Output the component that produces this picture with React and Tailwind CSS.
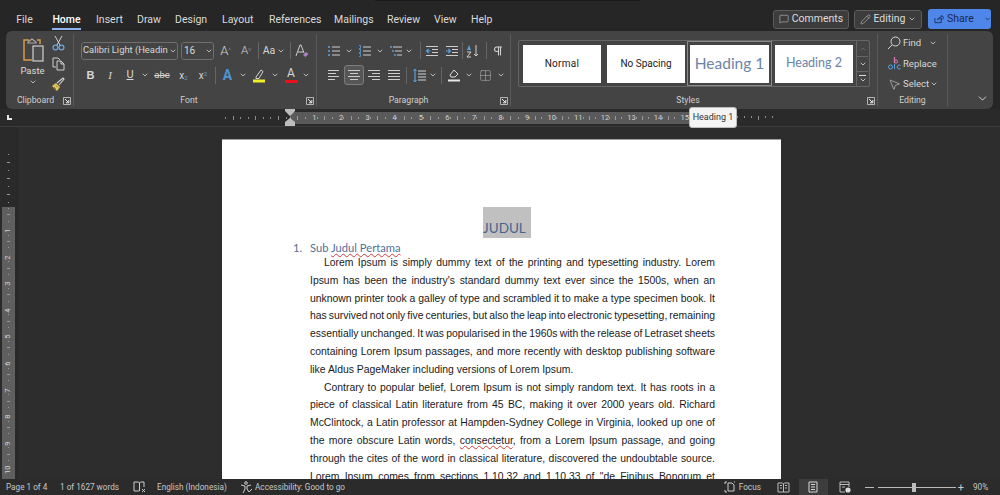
import React from "react";
import { ChevronDown, ChevronUp, MessageSquare, Pencil, MousePointer2, Pilcrow, Grid2x2 } from "lucide-react";

const G = "#cdcdcd";
const B = "#5aa0dc";

const Chev = ({ w = "w-[12px]" }) => (
  <span className={`${w} flex justify-center shrink-0`}>
    <ChevronDown size={8} strokeWidth={2.4} color="#d6d6d6" />
  </span>
);

const Ic = ({ children, w = 14, h = 14, vb = "0 0 14 14" }) => (
  <svg width={w} height={h} viewBox={vb} fill="none" className="shrink-0">{children}</svg>
);

const Lines = ({ kind }) => {
  const rows = {
    left: [[1, 12], [1, 9], [1, 12], [1, 8]],
    center: [[1, 13], [3, 11], [1, 13], [3, 11]],
    right: [[1, 13], [5, 13], [1, 13], [5, 13]],
    just: [[1, 13], [1, 13], [1, 13], [1, 13]],
  }[kind];
  return (
    <Ic>
      {rows.map((r, i) => (
        <path key={i} d={`M${r[0]} ${2.5 + i * 3}H${r[1]}`} stroke={G} strokeWidth="1" />
      ))}
    </Ic>
  );
};

const ListIc = ({ kind }) => (
  <Ic>
    {[3, 7, 11].map((y, i) => (
      <g key={y}>
        {kind === "bul" && <circle cx="2" cy={y} r="1.1" fill={B} />}
        {kind === "num" && <path d={`M1 ${y - 1.5}h1.5v3H1`} stroke={B} strokeWidth=".8" />}
        {kind === "multi" && <path d={`M${1 + i * 2} ${y}h2`} stroke={B} strokeWidth="1.4" />}
        <path d={`M${kind === "multi" ? 4 + i * 2 : 5} ${y}H13`} stroke={G} strokeWidth="1" />
      </g>
    ))}
  </Ic>
);

const Indent = ({ flip }) => (
  <Ic>
    <path d="M1 2.5h12M7 5.5h6M7 8.5h6M1 11.5h12" stroke={G} strokeWidth="1" />
    <path d={flip ? "M1 7h4M3.4 5l2 2-2 2" : "M5.5 7h-4M3.6 5l-2 2 2 2"} stroke={B} strokeWidth="1.2" />
  </Ic>
);

const Launcher = () => (
  <svg width="8" height="8" viewBox="0 0 8 8" fill="none" className="shrink-0">
    <path d="M.5 .5h7v7h-7z" stroke="#cfcfcf" strokeWidth=".8" />
    <path d="M2 2l3.6 3.6M3 5.8h2.8V3" stroke="#ececec" strokeWidth="1" />
  </svg>
);

const Vsep = () => <span className="block w-px h-[17px] bg-[#666666] shrink-0" />;

const Group = ({ w, label, launcher, children, labelPad = "pr-[12px]" }) => (
  <div className={`${w} shrink-0 h-full flex flex-col border-r border-[#5a5a5a]`}>
    <div className="flex-1 min-h-0">{children}</div>
    <div className={`h-[12px] relative flex items-center justify-center pt-[2px] text-[8.7px] text-[#cfcfcf] ${labelPad}`}>
      <span>{label}</span>
      {launcher && (
        <span className="absolute right-[2px] top-[3px]">
          <Launcher />
        </span>
      )}
    </div>
  </div>
);

const Btn = ({ w, children, cls = "" }) => (
  <span className={`${w} h-[20px] flex items-center justify-center shrink-0 ${cls}`}>{children}</span>
);

const Clipboard = () => (
  <div className="flex pl-[14px] pt-[3px]">
    <div className="w-[25px] flex flex-col items-center">
      <svg width="24" height="25" viewBox="0 0 24 25" fill="none">
        <path d="M8 3H3v20h8" stroke="#d99a45" strokeWidth="1.5" />
        <path d="M16 3h3v4" stroke="#d99a45" strokeWidth="1.5" />
        <path d="M7 5l4-3 4 3v1H7z" stroke="#a8a8a8" strokeWidth="1.2" />
        <rect x="12" y="9" width="10" height="15" fill="#4c4c4c" stroke="#dcdcdc" strokeWidth="1.1" />
      </svg>
      <span className="text-[9.5px] text-[#dcdcdc] mt-[3px] leading-[11px]">Paste</span>
      <ChevronDown size={8} strokeWidth={2.4} color="#d6d6d6" className="mt-[2px]" />
    </div>
    <div className="flex flex-col items-center ml-[6px] -mt-[1px] gap-[6px]">
      <svg width="13" height="15" viewBox="0 0 13 15" fill="none">
        <path d="M3 0l5 9M10 0L5 9" stroke="#cfcfcf" strokeWidth="1" />
        <circle cx="3.5" cy="11.5" r="2.4" stroke="#6aa5db" strokeWidth="1.3" />
        <circle cx="9.5" cy="11.5" r="2.4" stroke="#6aa5db" strokeWidth="1.3" />
      </svg>
      <svg width="13" height="14" viewBox="0 0 13 14" fill="none">
        <path d="M4 10H1V1h5l2 2" stroke="#cfcfcf" />
        <path d="M5 4h4l3 3v6H5zM9 4v3h3" stroke="#cfcfcf" />
      </svg>
      <svg width="14" height="14" viewBox="0 0 14 14" fill="none">
        <path d="M1 9l4-3 4 4-3 4z" fill="#e5c95a" />
        <path d="M3 10l2 2M5 8.5l2 2" stroke="#6b5a20" strokeWidth=".8" />
        <path d="M6 6l6-5 1 1-5 6" stroke="#d2d2d2" strokeWidth="1.1" />
      </svg>
    </div>
  </div>
);

const FontGroup = () => (
  <div className="flex flex-col pl-[7px] pt-[7px]">
    <div className="flex items-center h-[19px]">
      <div className="w-[97px] h-[18px] border border-[#6e6e6e] rounded-[3px] flex items-center justify-between pl-[1px] text-[9.4px] text-[#d8d8d8]">
        <span className="w-[85px] overflow-hidden whitespace-nowrap">Calibri Light (Heading</span>
        <Chev w="w-[9px]" />
      </div>
      <div className="ml-[3px] w-[33px] h-[18px] border border-[#6e6e6e] rounded-[3px] flex items-center justify-between pl-[2px] text-[10px] text-[#d8d8d8]">
        <span>16</span>
        <Chev w="w-[9px]" />
      </div>
      <Btn w="w-[21px] ml-[1px]"><span className="text-[13px] text-[#d4d4d4] font-light">A<sup className="text-[6px] text-[#8fb4d8]">^</sup></span></Btn>
      <Btn w="w-[20px]"><span className="text-[11.5px] text-[#d4d4d4] font-light">A<sup className="text-[6px] text-[#8fb4d8]">v</sup></span></Btn>
      <span className="ml-[2px]"><Vsep /></span>
      <Btn w="w-[26px] ml-[2px]"><span className="text-[10.5px] text-[#d4d4d4]">Aa</span><ChevronDown size={8} strokeWidth={2.4} color="#d6d6d6" className="ml-[2px]" /></Btn>
      <span className="ml-[3px]"><Vsep /></span>
      <Btn w="w-[20px] ml-[1px]">
        <svg width="14" height="14" viewBox="0 0 14 14" fill="none">
          <path d="M1 12L5 1h1l3 8M3 8h5" stroke="#cfcfcf" strokeWidth="1" />
          <path d="M8 11l3-3 2.5 2-3 3z" fill="#b07fc7" />
        </svg>
      </Btn>
    </div>
    <div className="flex items-center h-[20px] mt-[5px] text-[#d8d8d8]">
      <Btn w="w-[19px]"><span className="text-[11px] font-bold" style={{ fontFamily: "Liberation Sans" }}>B</span></Btn>
      <Btn w="w-[20px]"><span className="text-[11px] italic" style={{ fontFamily: "Liberation Serif" }}>I</span></Btn>
      <Btn w="w-[20px]"><span className="text-[11px] underline">U</span></Btn>
      <Chev w="w-[10px]" />
      <Btn w="w-[24px]"><span className="text-[9.5px] line-through">abc</span></Btn>
      <Btn w="w-[19px]"><span className="text-[10px]">x<sub className="text-[6px] text-[#6f9fc9]">2</sub></span></Btn>
      <Btn w="w-[20px]"><span className="text-[10px]">x<sup className="text-[6px] text-[#6f9fc9]">2</sup></span></Btn>
      <span className="ml-[2px]"><Vsep /></span>
      <Btn w="w-[21px] ml-[1px]"><span className="text-[14px] font-bold text-[#4f94d4]">A</span></Btn>
      <Chev w="w-[9px]" />
      <Btn w="w-[22px] ml-[1px]">
        <svg width="14" height="15" viewBox="0 0 14 15" fill="none">
          <path d="M4 9l5-7 2 1.5-4 7H4z" stroke="#d2d2d2" />
          <rect x="1" y="11.5" width="12" height="3" fill="#f2ee2a" />
        </svg>
      </Btn>
      <Chev w="w-[9px]" />
      <Btn w="w-[20px] ml-[2px]">
        <span className="flex flex-col items-center">
          <span className="text-[12px] leading-[11px]">A</span>
          <span className="w-[13px] h-[3px] bg-[#e8101a] mt-[1px]" />
        </span>
      </Btn>
      <Chev w="w-[9px]" />
    </div>
  </div>
);

const ParagraphGroup = () => (
  <div className="flex flex-col pl-[9px] pt-[7px]">
    <div className="flex items-center h-[19px]">
      <Btn w="w-[16px]"><ListIc kind="bul" /></Btn>
      <Chev w="w-[14px]" />
      <Btn w="w-[17px]"><ListIc kind="num" /></Btn>
      <Chev w="w-[14px]" />
      <Btn w="w-[17px]"><ListIc kind="multi" /></Btn>
      <Chev w="w-[10px]" />
      <span className="ml-[6px]"><Vsep /></span>
      <Btn w="w-[20px] ml-[1px]"><Indent /></Btn>
      <Btn w="w-[20px]"><Indent flip /></Btn>
      <Vsep />
      <Btn w="w-[18px]">
        <svg width="14" height="16" viewBox="0 0 14 16" fill="none">
          <path d="M2 7l2-5 2 5z" fill={B} />
          <path d="M2 9h4l-4 5h4" stroke="#d2d2d2" />
          <path d="M11 2v11M9 11l2 2 2-2" stroke="#d2d2d2" />
        </svg>
      </Btn>
      <span className="ml-[5px]"><Vsep /></span>
      <Btn w="w-[21px]"><Pilcrow size={12} strokeWidth={2.2} color="#cfcfcf" /></Btn>
    </div>
    <div className="flex items-center h-[20px] mt-[5px]">
      <Btn w="w-[16px]"><Lines kind="left" /></Btn>
      <Btn w="w-[20px] ml-[2px] border border-[#7c7c7c] rounded-[3px] bg-[#565656]"><Lines kind="center" /></Btn>
      <Btn w="w-[20px]"><Lines kind="right" /></Btn>
      <Btn w="w-[20px]"><Lines kind="just" /></Btn>
      <span className="ml-[2px]"><Vsep /></span>
      <Btn w="w-[21px] ml-[1px]">
        <svg width="14" height="15" viewBox="0 0 14 15" fill="none">
          <path d="M3 1v13" stroke={B} strokeWidth="1.2" />
          <path d="M1.5 3L3 1l1.5 2M1.5 12L3 14l1.5-2" stroke={B} />
          <path d="M6 3h8M6 6h8M6 9h8M6 12h8" stroke="#d2d2d2" />
        </svg>
      </Btn>
      <Chev w="w-[8px]" />
      <span className="ml-[4px]"><Vsep /></span>
      <Btn w="w-[21px] ml-[1px]">
        <svg width="14" height="15" viewBox="0 0 14 15" fill="none">
          <path d="M3 7l4-5 4 4-3 3H4z" stroke="#dcdcdc" />
          <rect x="1" y="11.5" width="12" height="2" fill="#e8e8e8" />
        </svg>
      </Btn>
      <Chev w="w-[9px]" />
      <Btn w="w-[20px] ml-[2px]"><Grid2x2 size={13} strokeWidth={1} color="#b9b9b9" /></Btn>
      <Chev w="w-[12px]" />
    </div>
  </div>
);

const StyleCard = ({ children, w = "w-[78px]", cls = "" }) => (
  <div className={`${w} h-[38px] shrink-0 bg-white flex items-center justify-center whitespace-nowrap ${cls}`}>{children}</div>
);

const StylesGroup = () => (
  <div className="pl-[7px] pt-[6px]">
    <div className="w-[352px] h-[47px] border border-[#666666] rounded-[2px] flex items-center pl-[4px]">
      <div className="flex items-center">
        <StyleCard cls="text-[10px] text-[#222222] tracking-[0.3px]">Normal</StyleCard>
        <StyleCard cls="ml-[6px] text-[10px] text-[#222222]">No Spacing</StyleCard>
        <div className="ml-[2px] w-[85px] h-[45px] border border-[#8a8a8a] flex items-center justify-center shrink-0">
          <StyleCard w="w-[79px]" cls="text-[15.5px] text-[#6a83a8]"><span style={{ fontFamily: "Lato, sans-serif" }}>Heading 1</span></StyleCard>
        </div>
        <StyleCard cls="ml-[3px] text-[12.5px] text-[#6a83a8]"><span style={{ fontFamily: "Lato, sans-serif" }}>Heading 2</span></StyleCard>
      </div>
      <div className="ml-[3px] w-[12px] h-[45px] flex flex-col border-l border-[#666666]">
        <span className="h-[16px] flex items-center justify-center border-b border-[#666666]"><ChevronUp size={8} color="#777777" /></span>
        <span className="h-[15px] flex items-center justify-center border-b border-[#666666]"><ChevronDown size={8} strokeWidth={2.4} color="#dddddd" /></span>
        <span className="h-[14px] flex flex-col items-center justify-center">
          <span className="w-[7px] h-px bg-[#dddddd]" />
          <ChevronDown size={8} strokeWidth={2.4} color="#dddddd" />
        </span>
      </div>
    </div>
  </div>
);

const EditRow = ({ icon, label, chev }) => (
  <div className="h-[20.5px] flex items-center pl-[8px] text-[9.5px] text-[#d8d8d8] whitespace-nowrap">
    <span className="w-[16px] flex justify-center shrink-0">{icon}</span>
    <span className="ml-[1px]">{label}</span>
    {chev}
  </div>
);

const EditingGroup = () => (
  <div className="-mt-[1px]">
    <EditRow
      icon={
        <svg width="14" height="14" viewBox="0 0 14 14" fill="none">
          <circle cx="8.5" cy="5.5" r="4.5" stroke="#d8d8d8" />
          <path d="M5.2 8.8L1 13" stroke="#d8d8d8" />
        </svg>
      }
      label="Find"
      chev={<span className="ml-[6px]"><Chev /></span>}
    />
    <EditRow
      icon={
        <svg width="15" height="15" viewBox="0 0 15 15" fill="none">
          <path d="M7.5 1v6" stroke="#d678b0" strokeWidth="1.3" />
          <circle cx="9" cy="5.5" r="1.6" stroke="#d678b0" />
          <circle cx="3.5" cy="11" r="2" stroke={B} />
          <path d="M13.5 9.5a2 2 0 1 0 0 3M7.5 8v5" stroke={B} />
        </svg>
      }
      label="Replace"
    />
    <EditRow icon={<MousePointer2 size={13} strokeWidth={1.1} color="#d8d8d8" />} label="Select" chev={<ChevronDown size={8} strokeWidth={2.4} color="#d6d6d6" className="ml-[1px]" />} />
  </div>
);

const Tab = ({ children, active, cls }) => (
  <span className={`relative text-center ${cls} ${active ? "font-medium text-white" : "text-[#dadada]"}`}>
    {children}
    {active && <span className="absolute left-0 right-0 top-[16px] h-[1.5px] bg-[#8fb4ee]" />}
  </span>
);

const TopBar = () => (
  <div className="h-[31px] shrink-0 flex items-center justify-between bg-[#262626] pl-[16px] pr-[9px] text-[10.5px] relative">
    <div className="absolute left-[375px] top-0 w-[265px] h-px bg-[#1a1a1a]" />
    <div className="flex items-center pt-[9px] whitespace-nowrap">
      <Tab cls="w-[17px]">File</Tab>
      <Tab active cls="w-[29px] ml-[19px]">Home</Tab>
      <Tab cls="w-[25px] ml-[15px]">Insert</Tab>
      <Tab cls="w-[23px] ml-[16px]">Draw</Tab>
      <Tab cls="w-[32px] ml-[15px]">Design</Tab>
      <Tab cls="w-[31px] ml-[15px]">Layout</Tab>
      <Tab cls="w-[48px] ml-[16px]">References</Tab>
      <Tab cls="w-[38px] ml-[17px]">Mailings</Tab>
      <Tab cls="w-[32px] ml-[15px]">Review</Tab>
      <Tab cls="w-[22px] ml-[15px]">View</Tab>
      <Tab cls="w-[21px] ml-[15px]">Help</Tab>
    </div>
    <div className="flex items-center gap-[5px] pt-[7px]">
      <div className="w-[76px] h-[19px] rounded-[3px] bg-[#3c3c3c] border border-[#5c5c5c] flex items-center justify-center gap-[3px] text-[#dcdcdc]">
        <MessageSquare size={10} strokeWidth={1.2} /> Comments
      </div>
      <div className="w-[68px] h-[19px] rounded-[3px] bg-[#3c3c3c] border border-[#5c5c5c] flex items-center justify-center gap-[2px] text-[#dcdcdc]">
        <Pencil size={11} strokeWidth={1.1} /> Editing <ChevronDown size={8} strokeWidth={2.2} />
      </div>
      <div className="w-[63px] h-[20px] ml-[1px] rounded-[3px] bg-[#4f86ea] flex items-center pl-[6px] gap-[3px] text-[#182a4f]">
        <svg width="11" height="10" viewBox="0 0 11 10" fill="none">
          <path d="M1 4v5h7V6M4 6c0-2 2-3 4-3V1l3 2.5L8 6V4.5c-2 0-3 .5-4 1.5z" stroke="#182a4f" strokeWidth=".9" />
        </svg>
        Share
        <ChevronDown size={8} strokeWidth={2.6} className="ml-[7px]" />
      </div>
    </div>
  </div>
);

const Ribbon = () => (
  <div className="ml-[6px] mr-[7px] h-[78px] shrink-0 rounded-[6px] bg-[#444444] flex overflow-hidden py-[3px]">
    <Group w="w-[68px]" label="Clipboard" labelPad="pr-[8px]" launcher><Clipboard /></Group>
    <Group w="w-[243px]" label="Font" launcher><FontGroup /></Group>
    <Group w="w-[194px]" label="Paragraph" launcher labelPad="pr-[10px]"><ParagraphGroup /></Group>
    <Group w="w-[367px]" label="Styles" launcher><StylesGroup /></Group>
    <Group w="w-[70px]" label="Editing" labelPad=""><EditingGroup /></Group>
    <div className="flex-1 flex items-end justify-end pr-[4px] pb-[1px]">
      <ChevronDown size={13} strokeWidth={1.7} color="#dddddd" />
    </div>
  </div>
);

const RulerCell = ({ n, v }) => (
  <span className={`${v ? "h-[26.6px] w-full flex-col" : "w-[26.6px] h-full"} shrink-0 flex items-center justify-between`}>
    <span className={`${v ? "w-[1px] h-[1px]" : "w-[1px] h-[2px]"} bg-[#9a9a9a]`} />
    <span className={`${v ? "w-[3px] h-[1px]" : "w-[1px] h-[4px]"} bg-[#9a9a9a]`} />
    <span className={`${v ? "w-[1px] h-[1px]" : "w-[1px] h-[2px]"} bg-[#9a9a9a]`} />
    <span className={`text-[7.5px] leading-none text-[#d4d4d4] ${v ? "-rotate-90" : ""}`}>{n}</span>
  </span>
);

const HRuler = () => (
  <div className="h-[18px] shrink-0 flex items-center bg-[#2a2a2a] border-b border-[#3c3c3c] relative">
    <span className="w-[18px] flex justify-center shrink-0">
      <span className="w-[5px] h-[5px] border-l-2 border-b-2 border-[#e8e8e8]" />
    </span>
    <div className="ml-[204px] h-[9px] w-[68px] flex shrink-0">
      {[3, 2, 1].map((n) => (
        <span key={n} className="w-[22.6px] flex justify-around items-center">
          <span className="w-px h-[2px] bg-[#8c8c8c]" /><span className="w-px h-[4px] bg-[#8c8c8c]" /><span className="w-px h-[2px] bg-[#8c8c8c]" />
        </span>
      ))}
    </div>
    <div className="h-[12px] w-[400px] bg-[#5a5a5a] flex items-center shrink-0 relative">
      {[1, 2, 3, 4, 5, 6, 7, 8, 9, 10, 11, 12, 13, 14, 15].map((n) => (
        <RulerCell key={n} n={n} />
      ))}
      <svg width="10" height="17" viewBox="0 0 10 17" className="absolute -left-[5px] -top-[3px]">
        <path d="M0 0h10v2L5 7 0 2zM5 9l5 4v4H0v-4z" fill="#bdbdbd" />
      </svg>
    </div>
    <div className="ml-[5px] flex gap-[6px]">
      {[0, 1, 2, 3, 4, 5, 6, 7, 8, 9, 10, 11].map((i) => (
        <span key={i} className={`w-px ${i % 4 === 1 ? "h-[4px]" : "h-[2px]"} bg-[#8c8c8c]`} />
      ))}
    </div>
    <div className="absolute left-[689px] top-[-2px] w-[48px] h-[21px] rounded-[3px] bg-[#f4f4f4] border border-[#bdbdbd] text-[9px] text-[#333333] flex items-center justify-center z-10 whitespace-nowrap">
      Heading 1
    </div>
  </div>
);

const VRuler = () => (
  <div className="w-[18px] shrink-0 h-full flex flex-col items-center border-r border-[#262626] bg-[#2a2a2a] overflow-hidden">
    <div className="h-[57px] mt-[23px] w-[3px] flex flex-col justify-around items-center shrink-0">
      {[0, 1, 2, 3, 4, 5, 6].map((i) => (
        <span key={i} className={`${i % 2 ? "w-[3px]" : "w-[1px]"} h-px bg-[#9a9a9a]`} />
      ))}
    </div>
    <div className="w-[13px] flex-1 bg-[#5f5f5f] flex flex-col pt-[1px]">
      {[1, 2, 3, 4, 5, 6, 7, 8, 9, 10].map((n) => (
        <RulerCell key={n} n={n} v />
      ))}
    </div>
  </div>
);

const L = ({ children, indent, cls = "" }) => (
  <div className={`h-[17.8px] leading-[17.8px] text-justify [text-align-last:justify] whitespace-nowrap ${indent ? "pl-[14px]" : ""} ${cls}`}>
    {children}
  </div>
);

const Page = () => (
  <div className="ml-[204px] w-[559px] shrink-0 bg-white border-t border-[#a0a0a0] pt-[67px] h-[500px]" style={{ fontFamily: "'Liberation Sans', sans-serif" }}>
    <div className="pl-[261px]">
      <div className="h-[31px] w-[48px] bg-[#c0c0c0] flex items-end text-[13.5px] leading-[20px] text-[#46668f]" style={{ fontFamily: "Lato, sans-serif" }}>JUDUL</div>
    </div>
    <div className="pl-[71px] h-[18px] flex items-center text-[11.2px] leading-[18px] text-[#4f719f] mt-px whitespace-nowrap" style={{ fontFamily: "Lato, sans-serif" }}>
      <span className="w-[17px]">1.</span>
      <span>Sub <span className="underline decoration-wavy decoration-[#d43a3a] decoration-[0.6px] underline-offset-[1px]">Judul Pertama</span></span>
    </div>
    <div className="-mt-[3px] pl-[88px] pr-[66px] text-[10.4px] text-[#1a1a1a]">
      <L indent>Lorem Ipsum is simply dummy text of the printing and typesetting industry. Lorem</L>
      <L>Ipsum has been the industry's standard dummy text ever since the 1500s, when an</L>
      <L>unknown printer took a galley of type and scrambled it to make a type specimen book. It</L>
      <L cls="[word-spacing:-1px]">has survived not only five centuries, but also the leap into electronic typesetting, remaining</L>
      <L cls="[word-spacing:-0.7px]">essentially unchanged. It was popularised in the 1960s with the release of Letraset sheets</L>
      <L>containing Lorem Ipsum passages, and more recently with desktop publishing software</L>
      <div className="h-[17.8px] leading-[17.8px] whitespace-nowrap">like Aldus PageMaker including versions of Lorem Ipsum.</div>
      <L indent>Contrary to popular belief, Lorem Ipsum is not simply random text. It has roots in a</L>
      <L>piece of classical Latin literature from 45 BC, making it over 2000 years old. Richard</L>
      <L>McClintock, a Latin professor at Hampden-Sydney College in Virginia, looked up one of</L>
      <L>the more obscure Latin words, <span className="underline decoration-wavy decoration-[#d43a3a] decoration-[0.6px] underline-offset-[1px]">consectetur</span>, from a Lorem Ipsum passage, and going</L>
      <L>through the cites of the word in classical literature, discovered the undoubtable source.</L>
      <L>Lorem Ipsum comes from sections 1.10.32 and 1.10.33 of "de Finibus Bonorum et</L>
    </div>
  </div>
);

const StatusBar = () => (
  <div className="h-[16px] shrink-0 bg-[#2b2b2b] flex items-center justify-between pl-[6px] text-[8.2px] text-[#c8c8c8] whitespace-nowrap">
    <div className="flex items-center">
      <span className="w-[40px]">Page 1 of 4</span>
      <span className="ml-[14px] w-[60px]">1 of 1627 words</span>
      <svg width="13" height="12" viewBox="0 0 13 12" fill="none" className="ml-[13px]">
        <path d="M1 1h4.5l1 1 1-1H11v5M6.5 2v8M1 1v9h5" stroke="#cfcfcf" />
        <path d="M9 8l3 3M12 8l-3 3" stroke="#cfcfcf" />
      </svg>
      <span className="ml-[11px] w-[70px]">English (Indonesia)</span>
      <svg width="14" height="13" viewBox="0 0 14 13" fill="none" className="ml-[13px]">
        <circle cx="6" cy="2" r="1.3" stroke="#cfcfcf" />
        <path d="M1 4l4 1v3l-2 4M11 4L7 5v3l2 3 3-3" stroke="#cfcfcf" />
      </svg>
      <span className="ml-px">Accessibility: Good to go</span>
    </div>
    <div className="flex items-center pr-[10px] h-full">
      <svg width="12" height="12" viewBox="0 0 12 12" fill="none">
        <path d="M4 2h4l2 2v6H4zM1 3V1h2M11 1h-1M1 9v2h2" stroke="#cfcfcf" />
      </svg>
      <span className="ml-[3px] w-[21px]">Focus</span>
      <svg width="13" height="11" viewBox="0 0 13 11" fill="none" className="ml-[17px]">
        <path d="M1 1h4.5l1 1 1-1H12v9H1zM6.5 2v8M3 3.5h2M3 6h2M8 3.5h2M8 6h2" stroke="#bdbdbd" />
      </svg>
      <span className="ml-[9px] w-[29px] h-full bg-[#3d3d3d] flex items-center justify-center">
        <svg width="10" height="12" viewBox="0 0 10 12" fill="none">
          <path d="M1 1h8v10H1zM3 3.5h4M3 6h4M3 8.5h4" stroke="#d8d8d8" />
        </svg>
      </span>
      <svg width="12" height="12" viewBox="0 0 12 12" fill="none" className="ml-[11px]">
        <path d="M1 1h9v5M1 1v10h5M1 3.5h9M3 6h3" stroke="#bdbdbd" />
        <circle cx="9" cy="9" r="2.6" fill="#dddddd" />
      </svg>
      <span className="ml-[14px] w-[9px] h-px bg-[#bbbbbb]" />
      <div className="ml-[4px] w-[78px] h-px bg-[#bbbbbb] relative">
        <span className="absolute left-[34px] -top-[4px] w-[4px] h-[9px] bg-[#bdbdbd]" />
      </div>
      <span className="ml-[2px] text-[11px] leading-none">+</span>
      <span className="ml-[9px] w-[17px]">90%</span>
    </div>
  </div>
);

export default function App() {
  return (
    <div className="w-[1000px] h-[495px] overflow-hidden flex flex-col bg-[#2d2d2d] relative" style={{ fontFamily: "Roboto, sans-serif" }}>
      <TopBar />
      <div className="bg-[#262626] shrink-0"><Ribbon /></div>
      <HRuler />
      <div className="flex-1 min-h-0 flex overflow-hidden">
        <VRuler />
        <div className="flex-1 pt-[12px] overflow-hidden bg-[#2d2d2d]">
          <Page />
        </div>
      </div>
      <StatusBar />
    </div>
  );
}
